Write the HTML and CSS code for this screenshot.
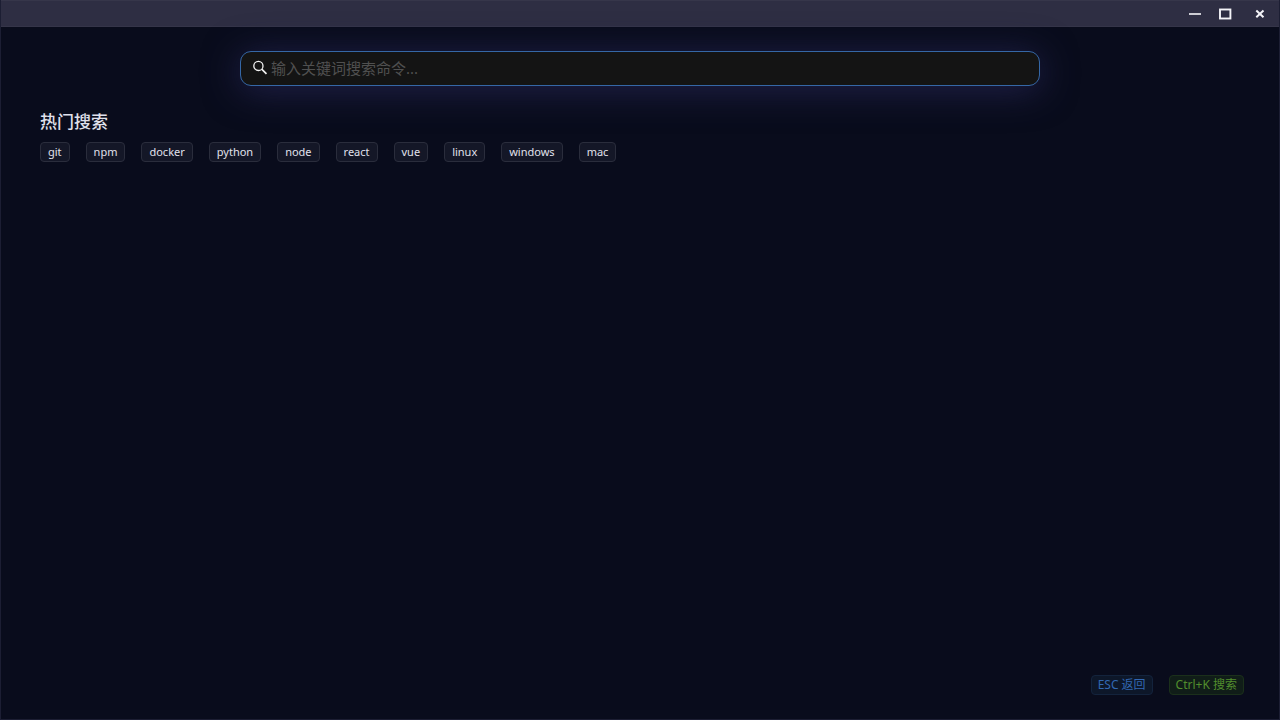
FILE: index.html
```html
<!DOCTYPE html>
<html lang="zh-CN">
<head>
<meta charset="utf-8">
<title>命令搜索</title>
<link rel="stylesheet" href="styles.css">
</head>
<body>
<div class="window">
  <header class="titlebar">
    <button class="win-btn" type="button" aria-label="最小化"><svg width="14" height="14" viewBox="0 0 14 14"><path d="M1 7h12" stroke="currentColor" stroke-width="1.6" fill="none"/></svg></button>
    <button class="win-btn win-btn-max" type="button" aria-label="最大化"><svg width="14" height="14" viewBox="0 0 14 14"><rect x="2" y="2.5" width="10.4" height="9" stroke="currentColor" stroke-width="1.9" fill="none"/></svg></button>
    <button class="win-btn" type="button" aria-label="关闭"><svg width="14" height="14" viewBox="0 0 14 14"><path d="M3.3 3.5l7.2 6.8M10.5 3.5l-7.2 6.8" stroke="currentColor" stroke-width="2" fill="none"/></svg></button>
  </header>
  <main class="content">
    <label class="search">
      <svg class="search-icon" width="16" height="16" viewBox="0 0 16 16" fill="none" stroke="currentColor" aria-hidden="true"><circle cx="6.4" cy="5.9" r="4.6" stroke-width="1.3"/><path d="M9.7 9.2l4.8 4.6" stroke-width="1.7"/></svg>
      <input class="search-input" type="text" aria-label="搜索命令" placeholder="输入关键词搜索命令...">
    </label>
    <section class="hot">
      <h2 class="hot-title">热门搜索</h2>
      <div class="tags">
        <button class="tag" type="button">git</button>
        <button class="tag" type="button">npm</button>
        <button class="tag" type="button">docker</button>
        <button class="tag" type="button">python</button>
        <button class="tag" type="button">node</button>
        <button class="tag" type="button">react</button>
        <button class="tag" type="button">vue</button>
        <button class="tag" type="button">linux</button>
        <button class="tag" type="button">windows</button>
        <button class="tag" type="button">mac</button>
      </div>
    </section>
  </main>
  <footer class="shortcuts">
    <button class="tag tag-blue" type="button">ESC 返回</button>
    <button class="tag tag-green" type="button">Ctrl+K 搜索</button>
  </footer>
</div>
</body>
</html>
```

FILE: styles.css
```css
* { box-sizing: border-box; }

body {
  margin: 0;
  background: #090c1c;
  color: #e0e1ec;
  font-family: "Noto Sans", "Noto Sans CJK SC", sans-serif;
}

button { font: inherit; color: inherit; }

.window {
  display: flex;
  flex-direction: column;
  min-height: 100vh;
  border: solid #1c1e33;
  border-width: 0 1px 1px;
}

.titlebar {
  display: flex;
  justify-content: flex-end;
  align-items: center;
  height: 27px;
  padding-right: 12px;
  background: #2e2e43;
  border-top: 1px solid #36364a;
  border-bottom: 1px solid #353549;
}

.win-btn {
  display: flex;
  padding: 0;
  border: 0;
  background: none;
  color: #f4f4f8;
}

.win-btn-max { margin: 0 21px 0 16px; }

.content {
  flex: 1;
  padding: 24px 39px;
}

.search {
  display: flex;
  align-items: center;
  gap: 3px;
  width: 100%;
  max-width: 800px;
  height: 35px;
  margin: 0 auto;
  padding: 0 11px 1px;
  background: #141414;
  border: 1px solid #3567a6;
  border-radius: 11px;
  box-shadow: 0 4px 36px #22224c;
}

.search-icon {
  flex: none;
  color: #f2f2f2;
}

.search-input {
  flex: 1;
  min-width: 0;
  padding: 0;
  border: 0;
  outline: 0;
  background: none;
  color: #e4e5ee;
  font: 15px "Noto Sans", "Noto Sans CJK SC", sans-serif;
}

.search-input::placeholder { color: #505050; opacity: 1; }

.hot { margin-top: 24px; }

.hot-title {
  margin: 0 0 8px;
  font-size: 17px;
  line-height: 24px;
  font-weight: 500;
}

.tags {
  display: flex;
  flex-wrap: wrap;
  gap: 16px;
}

.tag {
  height: 20px;
  padding: 0 7px;
  background: #141727;
  border: 1px solid #2a2d3c;
  border-radius: 4px;
  font-size: 11px;
  line-height: 18px;
}

.shortcuts {
  display: flex;
  justify-content: flex-end;
  gap: 16px;
  padding: 0 35px 24px;
}

.tag-blue,
.tag-green {
  padding: 0 6px;
  font-size: 12px;
}

.tag-blue {
  background: #0d1729;
  border-color: #13233c;
  color: #3267b2;
}

.tag-green {
  background: #101d18;
  border-color: #1b301b;
  color: #528d2d;
}
```
